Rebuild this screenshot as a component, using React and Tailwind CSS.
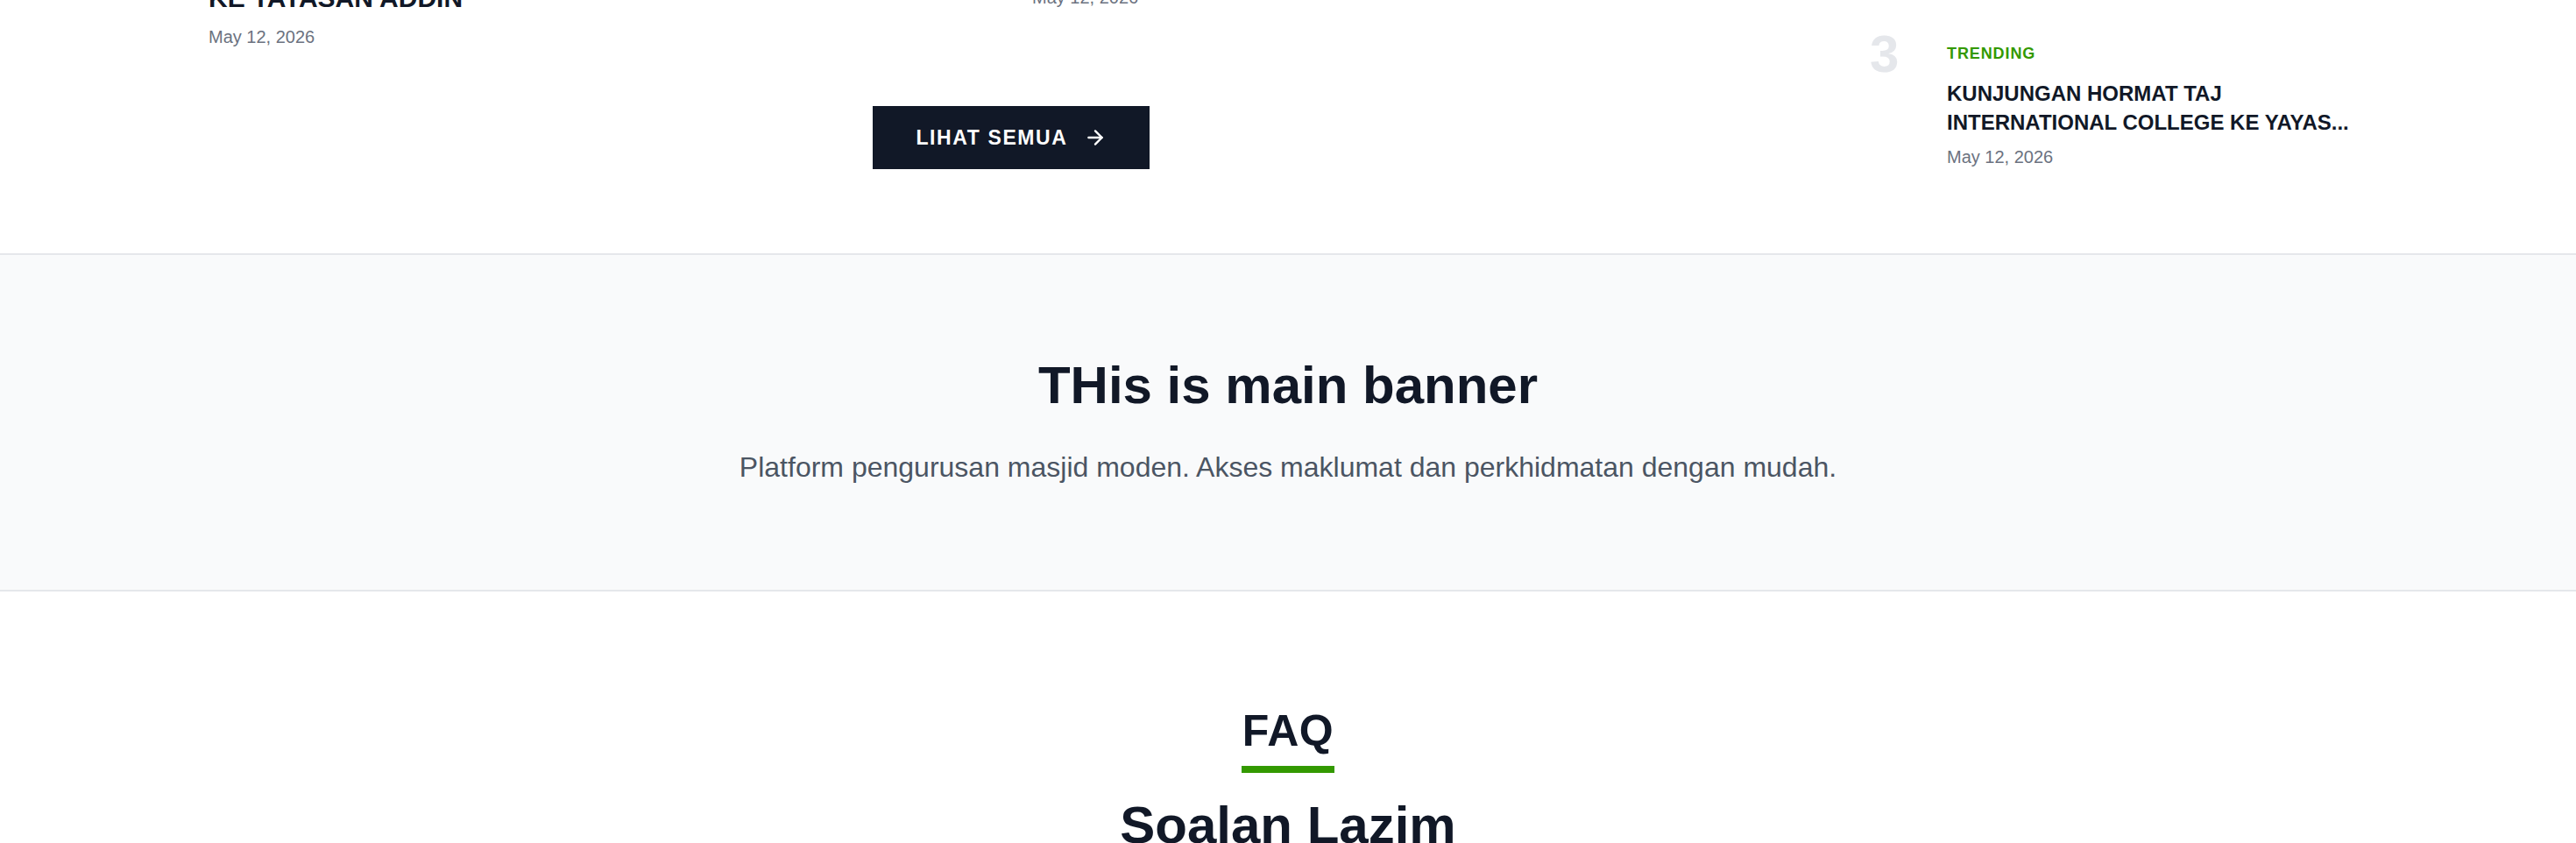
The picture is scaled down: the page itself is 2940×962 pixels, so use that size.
import { ArrowRight, ChevronDown } from "lucide-react";

const cards = [
  {
    title: ["KUNJUNGAN HORMAT TAJ INTERNATIONAL COLLEGE", "KE YAYASAN ADDIN"],
    date: "May 12, 2026",
  },
  {
    title: ["MAJLIS SAMBUTAN MAAL HIJRAH 1448H"],
    date: "May 12, 2026",
  },
];

const faqs = [
  "Bagaimana cara mendaftar sebagai ahli kariah?",
  "Bagaimana saya boleh membuat sumbangan?",
  "Di manakah saya boleh melihat waktu solat?",
];

export default function App() {
  return (
    <div className="h-[962px] overflow-hidden bg-white font-['Liberation_Sans',Arial,sans-serif] text-[#111827]">
      {/* Latest news + trending */}
      <section className="pb-[96px]">
        <div className="mx-auto -mt-[70px] flex w-[2464px] items-start gap-[64px]">
          <div className="flex w-[1832px] shrink-0 flex-col items-center">
            <div className="grid w-full grid-cols-2 gap-[48px]">
              {cards.map((c, i) => (
                <article key={i} className="text-left">
                  <h3 className="text-[30px] font-bold uppercase leading-[45px] text-[#111827]">
                    {c.title.map((t, j) => (
                      <span key={j} className="block">
                        {t}
                      </span>
                    ))}
                  </h3>
                  <p className="mt-[8px] text-[20px] leading-[28px] text-[#6b7280]">{c.date}</p>
                </article>
              ))}
            </div>
            <a
              href="#"
              className="mt-[65px] inline-flex h-[72px] items-center gap-[18px] bg-[#111827] px-[49px] text-[23px] font-bold uppercase tracking-[1.6px] text-white"
            >
              <span>LIHAT SEMUA</span>
              <ArrowRight size={26} strokeWidth={2.2} />
            </a>
          </div>

          <aside className="w-[568px] shrink-0 pt-[102px]">
            <div className="flex items-start gap-[48px]">
              <span className="w-[40px] text-[60px] font-bold leading-[60px] text-[#e5e7eb]">3</span>
              <div className="flex-1 pt-[17px]">
                <p className="text-[18px] font-bold uppercase leading-[24px] tracking-[0.9px] text-[#339900]">
                  TRENDING
                </p>
                <h4 className="mt-[17px] text-[24px] font-bold uppercase leading-[33px] text-[#111827]">
                  KUNJUNGAN HORMAT TAJ INTERNATIONAL COLLEGE KE YAYAS...
                </h4>
                <p className="mt-[9px] text-[20px] leading-[28px] text-[#6b7280]">May 12, 2026</p>
              </div>
            </div>
          </aside>
        </div>
      </section>

      {/* Main banner */}
      <section className="border-y-2 border-[#e5e7eb] bg-[#f9fafb] pt-[111px] pb-[116px] text-center">
        <h1 className="text-[60px] font-bold leading-[75px] text-[#111827]">THis is main banner</h1>
        <p className="mt-[32px] text-[32px] leading-[48px] text-[#4b5563]">
          Platform pengurusan masjid moden. Akses maklumat dan perkhidmatan dengan mudah.
        </p>
      </section>

      {/* FAQ */}
      <section className="pt-[129px] pb-[120px] text-center">
        <h2 className="text-[50px] font-bold leading-[60px] tracking-[0.5px] text-[#111827]">FAQ</h2>
        <div className="mx-auto mt-[10px] h-[8px] w-[106px] bg-[#339900]" />
        <h3 className="mt-[22px] text-[60px] font-bold leading-[75px] text-[#111827]">Soalan Lazim</h3>
        <div className="mx-auto mt-[64px] flex w-[1600px] flex-col gap-[20px] text-left">
          {faqs.map((q) => (
            <div
              key={q}
              className="flex items-center justify-between border-2 border-[#e5e7eb] px-[40px] py-[32px] text-[28px] font-bold text-[#111827]"
            >
              <span>{q}</span>
              <ChevronDown size={32} />
            </div>
          ))}
        </div>
      </section>
    </div>
  );
}
